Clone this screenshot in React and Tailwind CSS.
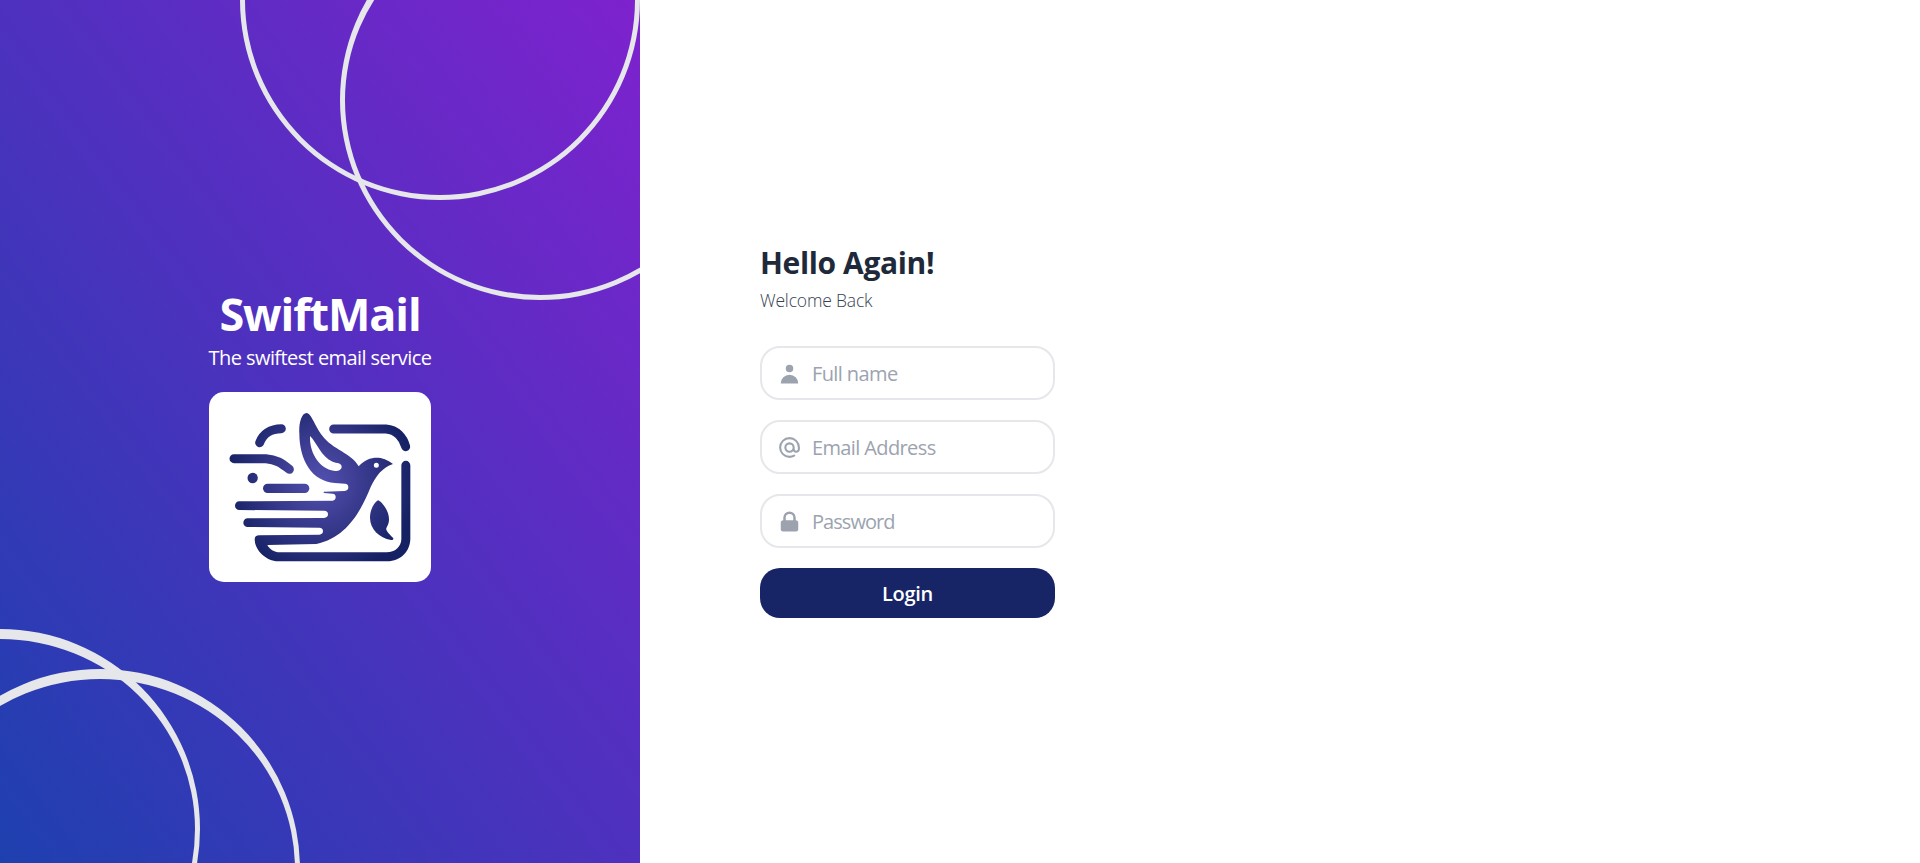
function BirdLogo() {
  return (
    <svg viewBox="-33 -39 666 570" className="block h-[190px] w-[222px]" role="img" aria-label="SwiftMail">
      <defs>
        <radialGradient id="ink" gradientUnits="userSpaceOnUse" cx="300" cy="230" r="290">
          <stop offset="0" stopColor="#5350b0" />
          <stop offset="0.5" stopColor="#36388a" />
          <stop offset="1" stopColor="#152163" />
        </radialGradient>
      </defs>
      <g fill="none" stroke="url(#ink)" strokeWidth="27" strokeLinecap="round">
        <path d="M119 113C128 88 152 71 184 71" />
        <path d="M42 161H138C168 163 184 174 208 193" />
        <path d="M341 72H498C530 74 550 98 557 125" />
      </g>
      <g fill="url(#ink)">
        <circle cx="98" cy="219" r="15.500" />
        <rect x="129" y="236" width="139" height="28" rx="14" />
        <path
          fillRule="evenodd"
          d="M238 85C236 60 243 24 260 24C274 25 283 60 307 92C338 134 395 144 416 184C433 164 454 157 475 158C495 160 508 169 519 177C487 188 468 212 452 246C423 318 380 398 289 417L142 420C148 432 162 442 180 442H500C525 442 544 425 544 402V181A13.500 13.500 0 0 1 571 181V402C570 440 542 468 502 469H168C132 464 104 432 104 403Q104 391 118 391L298 389Q309 388 309 379Q309 368 298 368L83 366A13 13 0 0 1 83 340L312 339Q324 338 324 328Q324 317 312 317L58 315A13 13 0 0 1 58 289L338 287Q347 286 347 276Q347 267 338 266L312 264Q309 262 312 260L374 258Q385 257 385 247Q385 236 375 236L345 234C275 230 238 165 238 85ZM270 93C268 135 290 183 334 196C350 200 364 197 365 185C364 172 350 175 338 170C303 156 291 113 270 93ZM469 173A7.500 7.500 0 1 0 469 188A7.500 7.500 0 1 0 469 173Z"
        />
        <path d="M474 286C483 288 507 315 507 343C507 362 497 367 499 374C503 384 516 394 520 400Q521 406 513 405C478 398 450 373 450 338C450 314 462 293 474 286Z" />
      </g>
    </svg>
  )
}

function UserIcon() {
  return (
    <svg viewBox="0 0 20 20" fill="currentColor" className="h-[25px] w-[25px] shrink-0 text-[#9ca3af]">
      <path fillRule="evenodd" d="M10 9a3 3 0 100-6 3 3 0 000 6zm-7 9a7 7 0 1114 0H3z" clipRule="evenodd" />
    </svg>
  )
}

function AtIcon() {
  return (
    <svg viewBox="0 0 24 24" fill="none" stroke="currentColor" className="h-[25px] w-[25px] shrink-0 text-[#9ca3af]">
      <path
        strokeLinecap="round"
        strokeLinejoin="round"
        strokeWidth="2"
        d="M16 12a4 4 0 10-8 0 4 4 0 008 0zm0 0v1.5a2.5 2.5 0 005 0V12a9 9 0 10-9 9m4.5-1.206a8.959 8.959 0 01-4.5 1.207"
      />
    </svg>
  )
}

function LockIcon() {
  return (
    <svg viewBox="0 0 20 20" fill="currentColor" className="h-[25px] w-[25px] shrink-0 text-[#9ca3af]">
      <path
        fillRule="evenodd"
        d="M5 9V7a5 5 0 0110 0v2a2 2 0 012 2v5a2 2 0 01-2 2H5a2 2 0 01-2-2v-5a2 2 0 012-2zm8-2v2H7V7a3 3 0 016 0z"
        clipRule="evenodd"
      />
    </svg>
  )
}

function Field({ icon, type, placeholder, textClass }) {
  return (
    <label className="mb-5 flex h-[54px] items-center rounded-[20px] border-2 border-gray-200 px-[15px]">
      {icon}
      <input
        type={type}
        placeholder={placeholder}
        className={`min-w-0 flex-1 border-none pt-[2px] pl-[10px] text-[20px] leading-[30px] outline-none placeholder:text-[#9ca3af] ${textClass}`}
      />
    </label>
  )
}

export default function App() {
  return (
    <div className="flex h-screen overflow-hidden bg-white font-['Open_Sans','Noto_Sans',sans-serif]">
      <aside className="relative flex w-1/3 flex-col items-center overflow-hidden bg-[linear-gradient(to_top_right,#1e40af,#7e22ce)] pt-[289px]">
        <div className="absolute -bottom-[166px] -left-[200px] h-[400px] w-[400px] rounded-full border-[5px] border-t-[10px] border-gray-200" />
        <div className="absolute -bottom-[206px] -left-[100px] h-[400px] w-[400px] rounded-full border-[5px] border-t-[10px] border-gray-200" />
        <div className="absolute -top-[200px] right-0 h-[400px] w-[400px] rounded-full border-[5px] border-t-[10px] border-gray-200" />
        <div className="absolute -top-[100px] -right-[100px] h-[400px] w-[400px] rounded-full border-[5px] border-t-[10px] border-gray-200" />
        <h1 className="relative text-[45px] leading-[50px] font-bold tracking-[-1.1px] whitespace-nowrap text-white">SwiftMail</h1>
        <p className="relative mt-1 text-[20px] leading-[30px] tracking-[-0.57px] whitespace-nowrap text-white">
          The swiftest email service
        </p>
        <div className="relative mt-[19px] overflow-hidden rounded-[15px] bg-white">
          <BirdLogo />
        </div>
      </aside>
      <main className="flex flex-1 items-center pl-[120px]">
        <form className="w-[295px] pb-[2px]">
          <h2 className="mb-[5px] text-[30px] leading-[40px] font-bold tracking-[-0.37px] whitespace-nowrap text-gray-800">
            Hello Again!
          </h2>
          <p className="mb-[33px] text-[17.5px] leading-[25px] font-light tracking-[-0.17px] text-gray-700">Welcome Back</p>
          <Field icon={<UserIcon />} type="text" placeholder="Full name" textClass="tracking-[-0.6px]" />
          <Field icon={<AtIcon />} type="text" placeholder="Email Address" textClass="tracking-[-0.62px]" />
          <Field icon={<LockIcon />} type="password" placeholder="Password" textClass="tracking-[-0.95px]" />
          <button
            type="button"
            className="block h-[50px] w-full rounded-[20px] bg-[#172466] pt-[2px] text-[20px] font-semibold tracking-[-0.3px] text-white"
          >
            Login
          </button>
        </form>
      </main>
    </div>
  )
}
